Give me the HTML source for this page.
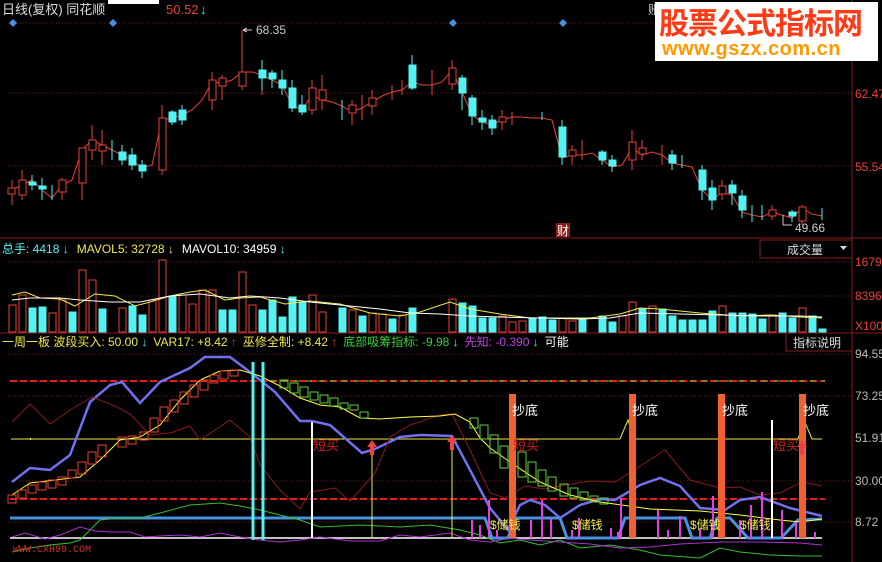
<!DOCTYPE html>
<html><head><meta charset="utf-8"><style>
body{margin:0;background:#000;width:882px;height:562px;overflow:hidden;font-family:"Liberation Sans","Noto Sans CJK SC",sans-serif}
svg{position:absolute;left:0;top:0}
.r{fill:#000;stroke:#e8403a;stroke-width:1}
.c{fill:#54f2f2;stroke:#54f2f2;stroke-width:1}
.wr{stroke:#e8403a;stroke-width:1}
.wc{stroke:#54f2f2;stroke-width:1}
.t{font-size:12px}
</style></head><body>
<svg width="882" height="562" xmlns="http://www.w3.org/2000/svg">
<!-- grid dotted -->
<g stroke="#6a1a1a" stroke-dasharray="1,2">
<line x1="8" y1="23" x2="852" y2="23"/><line x1="8" y1="93" x2="852" y2="93"/><line x1="8" y1="166" x2="852" y2="166"/>
<line x1="8" y1="262" x2="852" y2="262"/><line x1="8" y1="296" x2="852" y2="296"/>
<line x1="8" y1="354" x2="852" y2="354"/><line x1="8" y1="396" x2="852" y2="396"/><line x1="8" y1="481" x2="852" y2="481"/><line x1="8" y1="522" x2="852" y2="522"/>
</g>
<!-- panel separators -->
<g stroke="#8a1c1c">
<line x1="0" y1="238" x2="882" y2="238"/><line x1="0" y1="333" x2="882" y2="333"/>
<line x1="852" y1="0" x2="852" y2="562"/>
</g>
<!-- diamonds -->
<g fill="#4a90e0"><path d="M13 19l4 4-4 4-4-4z"/><path d="M113 19l4 4-4 4-4-4z"/><path d="M453 19l4 4-4 4-4-4z"/><path d="M563 19l4 4-4 4-4-4z"/></g>
<!-- close line -->
<polyline fill="none" stroke="#e8403a" points="12,190 22,185 32,180 42,190 52,198 62,185 72,180 82,150 92,140 102,145 112,150 122,155 132,160 142,168 152,165 162,120 172,118 182,115 192,110 202,100 212,82 222,83 232,80 242,72 252,72 262,75 272,80 282,85 292,105 302,110 312,95 322,100 332,102 342,106 352,112 362,108 372,102 382,96 392,92 402,90 412,82 422,85 432,85 442,82 452,70 462,92 472,115 482,122 492,125 502,120 512,117 522,117 532,118 542,118 552,120 562,158 572,155 582,155 592,153 602,160 612,167 622,165 632,148 642,155 652,152 662,155 672,163 682,165 692,167 702,190 712,200 722,192 732,195 742,212 752,215 762,217 772,212 782,215 792,218 802,208 812,214 822,216"/>
<!-- candles -->
<g>
<path class="wr" d="M12 180V205M22 170V200M62 178V200M82 148V200M92 125V160M102 130V165M162 105V175M212 72V110M222 75V100M242 30V90M262 65V95M312 80V115M322 75V110M352 100V125M362 95V120M372 90V115M392 85V100M402 80V95M432 70V95M452 60V90M502 110V130M512 112V125M572 145V165M582 140V160M632 130V170M642 140V160M662 145V165M722 180V200M772 205V220M802 205V225"/>
<path class="wc" d="M32 175V190M42 178V200M52 185V200M112 140V160M122 145V165M132 148V170M142 160V178M172 110V125M182 105V125M262 60V90M272 70V88M282 70V95M292 80V112M302 95V115M342 100V120M412 55V90M462 75V110M472 95V125M482 110V130M492 115V135M542 112V120M562 120V165M602 150V165M612 155V172M672 150V170M682 155V168M702 165V200M712 180V210M732 180V205M742 190V218M752 205V222M762 205V220M792 210V222M822 208V220"/>
<rect class="r" x="8" y="188" width="7" height="6"/><rect class="r" x="19" y="180" width="7" height="15"/><rect class="r" x="59" y="180" width="7" height="12"/><rect class="r" x="79" y="148" width="7" height="35"/><rect class="r" x="89" y="140" width="7" height="10"/><rect class="r" x="99" y="145" width="7" height="6"/><rect class="r" x="159" y="118" width="7" height="52"/><rect class="r" x="209" y="80" width="7" height="20"/><rect class="r" x="219" y="78" width="7" height="8"/><rect class="r" x="239" y="72" width="7" height="14"/><rect class="r" x="309" y="88" width="7" height="22"/><rect class="r" x="319" y="90" width="7" height="10"/><rect class="r" x="349" y="105" width="7" height="8"/><rect class="r" x="369" y="98" width="7" height="8"/><rect class="r" x="449" y="68" width="7" height="16"/><rect class="r" x="499" y="117" width="7" height="5"/><rect class="r" x="569" y="150" width="7" height="6"/><rect class="r" x="629" y="142" width="7" height="18"/><rect class="r" x="639" y="148" width="7" height="6"/><rect class="r" x="719" y="186" width="7" height="8"/><rect class="r" x="769" y="210" width="7" height="6"/><rect class="r" x="799" y="207" width="7" height="14"/>
<rect class="c" x="29" y="182" width="7" height="3"/><rect class="c" x="39" y="186" width="7" height="3"/><rect class="c" x="119" y="152" width="7" height="8"/><rect class="c" x="129" y="155" width="7" height="10"/><rect class="c" x="139" y="165" width="7" height="6"/><rect class="c" x="169" y="112" width="7" height="10"/><rect class="c" x="179" y="110" width="7" height="10"/><rect class="c" x="259" y="70" width="7" height="8"/><rect class="c" x="269" y="73" width="7" height="6"/><rect class="c" x="279" y="80" width="7" height="8"/><rect class="c" x="289" y="88" width="7" height="20"/><rect class="c" x="299" y="105" width="7" height="7"/><rect class="c" x="409" y="65" width="7" height="23"/><rect class="c" x="459" y="78" width="7" height="15"/><rect class="c" x="469" y="98" width="7" height="18"/><rect class="c" x="479" y="118" width="7" height="4"/><rect class="c" x="489" y="120" width="7" height="8"/><rect class="c" x="559" y="127" width="7" height="30"/><rect class="c" x="599" y="152" width="7" height="8"/><rect class="c" x="609" y="160" width="7" height="6"/><rect class="c" x="669" y="155" width="7" height="8"/><rect class="c" x="699" y="170" width="7" height="20"/><rect class="c" x="709" y="188" width="7" height="12"/><rect class="c" x="729" y="185" width="7" height="8"/><rect class="c" x="739" y="196" width="7" height="14"/><rect class="c" x="789" y="212" width="7" height="4"/>
</g>
<path d="M243 30H252M243 30l4 -2M243 30l4 2" stroke="#ccc" fill="none"/>
<text x="256" y="34" fill="#ccc" class="t">68.35</text>
<path d="M783 225H792" stroke="#ccc"/><path d="M783 215V225" stroke="#ccc"/>
<text x="795" y="232" fill="#ccc" class="t">49.66</text>
<rect x="556" y="223" width="14" height="14" fill="#901818"/><text x="557" y="235" fill="#fff" class="t">财</text>
<!-- title -->
<text x="2" y="14" fill="#ddd" font-size="13">日线(复权) 同花顺</text>
<rect x="108" y="0" width="51" height="4" fill="#fff"/>
<text x="166" y="14" fill="#e8403a" font-size="13">50.52</text><text x="200" y="14" fill="#54f2f2" font-size="13">↓</text>
<text x="648" y="14" fill="#ccc" font-size="12">账</text>
<!-- watermark -->
<rect x="655" y="2" width="223" height="59" fill="#fff"/>
<text x="659" y="34" fill="#ff3a14" font-size="30" font-weight="bold" font-family="'Noto Sans CJK SC',sans-serif" letter-spacing="-1">股票公式指标网</text>
<text x="662" y="55" fill="#ff9a00" font-size="20" font-weight="bold" letter-spacing="0.5">www.gszx.com.cn</text>
<!-- right axis labels -->
<g fill="#e8403a" font-size="12"><text x="855" y="98">62.47</text><text x="855" y="171">55.54</text><text x="855" y="266">1679</text><text x="855" y="300">8396</text><text x="855" y="330">X100</text></g>
<g fill="#bbb" font-size="12"><text x="855" y="358">94.55</text><text x="855" y="400">73.25</text><text x="855" y="442">51.91</text><text x="855" y="485">30.00</text><text x="855" y="526">8.72</text></g>
<!-- volume header -->
<text x="2" y="253" class="t"><tspan fill="#54f2f2">总手: 4418 ↓</tspan><tspan fill="#eeea4a" dx="8">MAVOL5: 32728 ↓</tspan><tspan fill="#fff" dx="8">MAVOL10: 34959</tspan><tspan fill="#54f2f2"> ↓</tspan></text>
<rect x="760" y="240" width="92" height="18" fill="#000" stroke="#8a1c1c"/>
<text x="787" y="254" fill="#ddd" class="t">成交量</text><path d="M840 246h7l-3.5 4z" fill="#ddd"/>
<!-- volume bars -->
<g class="r">
<rect x="9" y="305" width="7" height="27"/><rect x="19" y="295" width="7" height="37"/><rect x="49" y="313" width="7" height="19"/><rect x="59" y="300" width="7" height="32"/><rect x="79" y="270" width="7" height="62"/><rect x="89" y="280" width="7" height="52"/><rect x="119" y="308" width="7" height="24"/><rect x="149" y="300" width="7" height="32"/><rect x="159" y="260" width="7" height="72"/><rect x="179" y="295" width="7" height="37"/><rect x="189" y="304" width="7" height="28"/><rect x="199" y="290" width="7" height="42"/><rect x="209" y="290" width="7" height="42"/><rect x="239" y="272" width="7" height="60"/><rect x="249" y="305" width="7" height="27"/><rect x="309" y="295" width="7" height="37"/><rect x="319" y="312" width="7" height="20"/><rect x="349" y="310" width="7" height="22"/><rect x="369" y="313" width="7" height="19"/><rect x="379" y="314" width="7" height="18"/><rect x="399" y="315" width="7" height="17"/><rect x="449" y="299" width="7" height="33"/><rect x="499" y="316" width="7" height="16"/><rect x="509" y="322" width="7" height="10"/><rect x="519" y="321" width="7" height="11"/><rect x="559" y="318" width="7" height="14"/><rect x="569" y="321" width="7" height="11"/><rect x="619" y="316" width="7" height="16"/><rect x="629" y="302" width="7" height="30"/><rect x="649" y="306" width="7" height="26"/><rect x="719" y="306" width="7" height="26"/><rect x="769" y="315" width="7" height="17"/><rect x="799" y="308" width="7" height="24"/></g>
<g class="c">
<rect x="29" y="308" width="7" height="24"/><rect x="39" y="307" width="7" height="25"/><rect x="69" y="312" width="7" height="20"/><rect x="99" y="309" width="7" height="23"/><rect x="129" y="306" width="7" height="26"/><rect x="139" y="315" width="7" height="17"/><rect x="169" y="296" width="7" height="36"/><rect x="219" y="310" width="7" height="22"/><rect x="229" y="310" width="7" height="22"/><rect x="259" y="310" width="7" height="22"/><rect x="269" y="300" width="7" height="32"/><rect x="279" y="317" width="7" height="15"/><rect x="289" y="297" width="7" height="35"/><rect x="299" y="302" width="7" height="30"/><rect x="339" y="308" width="7" height="24"/><rect x="359" y="316" width="7" height="16"/><rect x="389" y="319" width="7" height="13"/><rect x="409" y="308" width="7" height="24"/><rect x="459" y="303" width="7" height="29"/><rect x="469" y="306" width="7" height="26"/><rect x="479" y="318" width="7" height="14"/><rect x="489" y="318" width="7" height="14"/><rect x="529" y="318" width="7" height="14"/><rect x="539" y="317" width="7" height="15"/><rect x="549" y="320" width="7" height="12"/><rect x="579" y="318" width="7" height="14"/><rect x="599" y="316" width="7" height="16"/><rect x="609" y="322" width="7" height="10"/><rect x="639" y="309" width="7" height="23"/><rect x="659" y="309" width="7" height="23"/><rect x="669" y="316" width="7" height="16"/><rect x="679" y="320" width="7" height="12"/><rect x="689" y="320" width="7" height="12"/><rect x="699" y="320" width="7" height="12"/><rect x="709" y="311" width="7" height="21"/><rect x="729" y="313" width="7" height="19"/><rect x="739" y="313" width="7" height="19"/><rect x="749" y="314" width="7" height="18"/><rect x="759" y="319" width="7" height="13"/><rect x="779" y="313" width="7" height="19"/><rect x="789" y="318" width="7" height="14"/><rect x="809" y="316" width="7" height="16"/><rect x="819" y="329" width="7" height="3"/></g>
<polyline fill="none" stroke="#eeea4a" points="12,295 25,292 40,298 60,299 75,306 95,294 115,296 135,306 150,302 170,296 190,292 205,290 225,300 240,298 260,297 285,304 310,301 340,304 370,313 400,316 420,312 450,302 470,309 500,314 530,318 560,318 590,318 620,314 640,308 660,309 700,313 740,316 770,315 800,317 822,318"/>
<polyline fill="none" stroke="#fff" points="12,300 30,298 60,298 80,300 110,302 140,302 170,296 200,294 230,298 250,296 280,298 310,302 340,305 380,309 410,313 440,314 470,316 500,317 540,318 580,319 610,318 640,313 680,314 720,315 760,316 800,316 822,317"/>
<!-- indicator header -->
<text x="2" y="346" class="t"><tspan fill="#eeea4a">一周一板 波段买入: 50.00</tspan><tspan fill="#54f2f2"> ↓</tspan><tspan fill="#eeea4a" dx="6">VAR17: +8.42</tspan><tspan fill="#e8403a"> ↑</tspan><tspan fill="#eeea4a" dx="6">巫修全制: +8.42</tspan><tspan fill="#e8403a"> ↑</tspan><tspan fill="#3ad03a" dx="6">底部吸筹指标: -9.98</tspan><tspan fill="#54f2f2"> ↓</tspan><tspan fill="#c040e0" dx="6">先知: -0.390</tspan><tspan fill="#54f2f2"> ↓</tspan><tspan fill="#fff" dx="6">可能</tspan></text>
<rect x="786" y="333" width="66" height="18" fill="#000" stroke="#8a1c1c"/>
<text x="793" y="347" fill="#ddd" class="t">指标说明</text>
<!-- indicator lines -->
<line x1="10" y1="381" x2="825" y2="381" stroke="#e02020" stroke-width="2" stroke-dasharray="7,3"/>
<line x1="10" y1="499" x2="825" y2="499" stroke="#e02020" stroke-width="2" stroke-dasharray="7,3"/>
<line x1="270" y1="381" x2="825" y2="381" stroke="#50d030" stroke-dasharray="6,6"/>
<polyline fill="none" stroke="#eeea4a" points="11,439 180,439 620,439 628,420 634,439 798,439 804,420 812,439 822,439"/>
<g fill="#eeea4a"><rect x="30" y="438" width="1" height="2"/></g>
<line x1="10" y1="538" x2="822" y2="538" stroke="#fff" stroke-width="1.5"/>
<line x1="10" y1="518" x2="470" y2="518" stroke="#4a90e0" stroke-width="3"/>
<polyline fill="none" stroke="#4a90e0" stroke-width="3" points="470,518 485,518 492,538 508,538 515,518 560,518 567,538 618,538 625,518 685,518 692,538 710,538 717,518 725,518 730,518 748,538 770,538 781,538 798,520 822,519"/>
<polyline fill="none" stroke="#7070f0" stroke-width="2.5" points="12,482 30,468 50,470 70,455 90,402 110,385 122,382 140,403 160,382 190,368 205,357 230,357 250,372 275,392 300,421 312,421 330,425 362,453 375,449 400,437 420,435 452,436 470,470 490,508 508,530 520,505 530,500 545,505 560,518 580,505 600,499 615,500 640,485 660,478 680,486 700,508 725,510 740,500 760,497 790,508 822,516"/>
<polyline fill="none" stroke="#8a1a1a" points="12,422 30,404 50,424 70,410 92,397 115,406 130,414 150,435 170,433 190,426 200,440 230,420 250,437 260,465 280,490 300,509 310,492 335,488 350,501 360,490 375,473 390,437 410,425 440,415 452,414 470,450 490,493 505,498 525,486 545,489 565,485 590,481 615,482 645,463 665,450 690,480 720,488 740,487 760,495 780,493 802,482 822,486"/>
<polyline fill="none" stroke="#ffff40" points="12,495 30,483 55,480 80,477 100,460 120,440 140,437 160,425 180,400 200,380 220,371 240,370 260,376 280,386 300,398 320,405 340,407 360,418 380,419 410,417 440,416 455,414 470,422 480,438 490,448 510,462 540,482 570,495 600,502 650,509 700,511 740,515 780,520 800,522 822,519"/>
<g fill="none" stroke="#e8403a">
<rect x="8" y="495" width="8" height="8"/><rect x="18" y="490" width="8" height="8"/><rect x="28" y="485" width="8" height="8"/><rect x="38" y="482" width="8" height="8"/><rect x="48" y="480" width="8" height="8"/><rect x="58" y="477" width="8" height="8"/><rect x="68" y="470" width="8" height="8"/><rect x="78" y="462" width="8" height="12"/><rect x="88" y="452" width="8" height="12"/><rect x="98" y="445" width="8" height="12"/><rect x="118" y="437" width="8" height="10"/><rect x="128" y="436" width="8" height="8"/><rect x="140" y="432" width="8" height="8"/><rect x="150" y="418" width="8" height="14"/><rect x="160" y="407" width="8" height="14"/><rect x="170" y="400" width="8" height="12"/><rect x="180" y="392" width="8" height="12"/><rect x="190" y="385" width="8" height="12"/><rect x="200" y="380" width="8" height="10"/><rect x="210" y="375" width="8" height="8"/><rect x="220" y="371" width="8" height="8"/><rect x="230" y="370" width="8" height="6"/></g>
<g fill="none" stroke="#60d040">
<rect x="280" y="380" width="8" height="8"/><rect x="290" y="383" width="8" height="10"/><rect x="300" y="387" width="8" height="10"/><rect x="310" y="392" width="8" height="8"/><rect x="320" y="395" width="8" height="8"/><rect x="330" y="398" width="8" height="8"/><rect x="340" y="403" width="8" height="6"/><rect x="350" y="405" width="8" height="5"/><rect x="360" y="412" width="8" height="6"/><rect x="470" y="418" width="8" height="10"/><rect x="480" y="425" width="8" height="14"/><rect x="490" y="435" width="8" height="18"/><rect x="500" y="446" width="8" height="22"/><rect x="518" y="452" width="8" height="25"/><rect x="528" y="462" width="8" height="20"/><rect x="538" y="470" width="8" height="16"/><rect x="548" y="477" width="8" height="14"/><rect x="560" y="484" width="8" height="12"/><rect x="570" y="488" width="8" height="10"/><rect x="580" y="492" width="8" height="8"/><rect x="590" y="496" width="8" height="6"/><rect x="600" y="498" width="8" height="6"/></g>
<polyline fill="none" stroke="#30c030" points="12,552 30,548 50,545 70,543 80,540 90,530 100,520 120,518 140,518 160,513 190,505 220,503 240,506 260,510 280,515 300,520 320,527 360,525 400,527 430,525 460,530 480,535 500,543 520,540 540,545 560,540 580,548 610,545 640,550 660,555 700,558 720,548 740,552 770,555 800,556 822,556"/>
<polyline fill="none" stroke="#b030d0" points="12,537 25,533 45,539 60,535 80,527 95,531 110,532 130,532 145,537 160,536 180,535 200,537 220,533 240,537 260,540 280,542 300,540 320,537 350,541 380,541 400,535 420,537 450,533 470,540 490,542 510,538 530,540 560,542 590,544 620,548 650,547 680,544 720,542 760,542 800,543 822,545"/>
<!-- magenta bars -->
<g stroke="#e040e0" stroke-width="2">
<path d="M472 538V520M480 538V525M489 538V500M497 538V530M531 538V520M542 538V500M551 538V518M572 538V530M579 538V518M611 538V528M618 538V532M621 538V498M632 538V530M658 538V510M668 538V530M680 538V516M700 538V528M713 538V496M722 538V526M740 538V520M751 538V505M762 538V492M772 538V520M782 538V510M796 538V522M815 538V532"/>
</g>
<!-- vertical signals -->
<g stroke="#54f2f2" stroke-width="3"><line x1="253" y1="362" x2="253" y2="540"/><line x1="263" y1="362" x2="263" y2="540"/></g>
<g stroke="#fff" stroke-width="2"><line x1="312" y1="422" x2="312" y2="538"/><line x1="512" y1="420" x2="512" y2="538"/><line x1="772" y1="420" x2="772" y2="538"/></g>
<g stroke="#eeea4a" stroke-width="1"><line x1="372" y1="445" x2="372" y2="538"/><line x1="452" y1="440" x2="452" y2="538"/><line x1="802" y1="440" x2="802" y2="538"/></g>
<g fill="#f06030"><rect x="509" y="394" width="7" height="144"/><rect x="629" y="394" width="7" height="144"/><rect x="718" y="394" width="7" height="144"/><rect x="799" y="394" width="7" height="144"/></g>
<g fill="#f04040"><path d="M372 440l-5 7h3v8h4v-8h3z"/><path d="M452 435l-5 7h3v8h4v-8h3z"/><path d="M802 440l-5 7h3v8h4v-8h3z"/></g>
<g fill="#fff" font-size="13"><text x="512" y="415">抄底</text><text x="632" y="415">抄底</text><text x="722" y="415">抄底</text><text x="803" y="415">抄底</text></g>
<g fill="#d02020" font-size="13"><text x="313" y="450">短买</text><text x="513" y="450">短买</text><text x="773" y="450">短买</text></g>
<g fill="#eeea4a" font-size="12"><text x="490" y="529">$储钱</text><text x="572" y="529">$储钱</text><text x="690" y="529">$储钱</text><text x="740" y="529">$储钱</text></g>
<text x="13" y="552" fill="#d03030" font-size="10" font-family="'Liberation Mono',monospace">WWW.CXH99.COM</text>
</svg>
</body></html>
